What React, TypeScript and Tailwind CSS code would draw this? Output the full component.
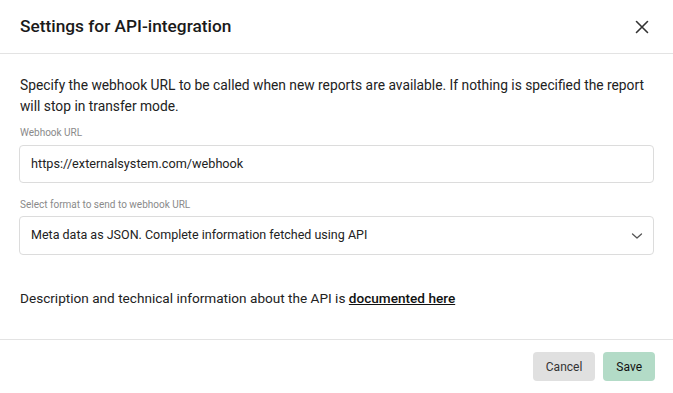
import React from "react";

export default function App() {
  return (
    <div className="w-[673px] h-[393px] bg-white overflow-hidden" style={{ fontFamily: "Roboto, 'Noto Sans', sans-serif" }}>
      <div className="flex flex-col h-full bg-white rounded-b-[6px]">
        <div className="h-[54px] flex items-center justify-between pl-5 pr-[24px] border-b border-[#e3e3e3]">
          <h1 className="text-[17.3px] font-medium text-[#1a1a1a]">Settings for API-integration</h1>
          <svg width="14" height="14" viewBox="0 0 14 14" className="text-[#333]">
            <path d="M1.5 1.5L12.5 12.5M12.5 1.5L1.5 12.5" stroke="currentColor" strokeWidth="1.6" strokeLinecap="round" />
          </svg>
        </div>
        <div className="px-[19px] pt-[21px] pb-[30px] border-b border-[#e3e3e3]">
          <p className="text-[13.8px] leading-[21px] text-[#222] pl-px">
            Specify the webhook URL to be called when new reports are available. If nothing is specified the report will stop in transfer mode.
          </p>
          <div className="mt-[8px] text-[10px] leading-[16px] text-[#8a8a8a] pl-px">Webhook URL</div>
          <div className="mt-[4px] h-[38px] rounded-[4px] border border-[#dcdcdc] flex items-center px-[11px] text-[12.7px] text-[#222]">
            https://externalsystem.com/webhook
          </div>
          <div className="mt-[14px] text-[10px] leading-[16px] text-[#8a8a8a] pl-px">Select format to send to webhook URL</div>
          <div className="mt-[3px] h-[39px] rounded-[4px] border border-[#dcdcdc] flex items-center justify-between pl-[11px] pr-[10px] text-[12.5px] text-[#222]">
            <span>Meta data as JSON. Complete information fetched using API</span>
            <svg width="12" height="8" viewBox="0 0 12 8">
              <path d="M1.5 2L6 6L10.5 2" stroke="#555" strokeWidth="1.3" fill="none" strokeLinecap="round" strokeLinejoin="round" />
            </svg>
          </div>
          <p className="mt-[33px] text-[13.6px] leading-[21px] text-[#222] pl-px">
            Description and technical information about the API is{" "}
            <a className="font-medium underline text-[#111]">documented here</a>
          </p>
        </div>
        <div className="flex justify-end gap-[8px] pt-[12px] pr-[18px]">
          <button className="h-[29px] px-[13px] rounded-[4px] bg-[#e0e0e0] text-[12px] text-[#333]">Cancel</button>
          <button className="h-[29px] px-[13px] rounded-[4px] bg-[#b3dbc7] text-[12px] text-[#111]">Save</button>
        </div>
      </div>
    </div>
  );
}
